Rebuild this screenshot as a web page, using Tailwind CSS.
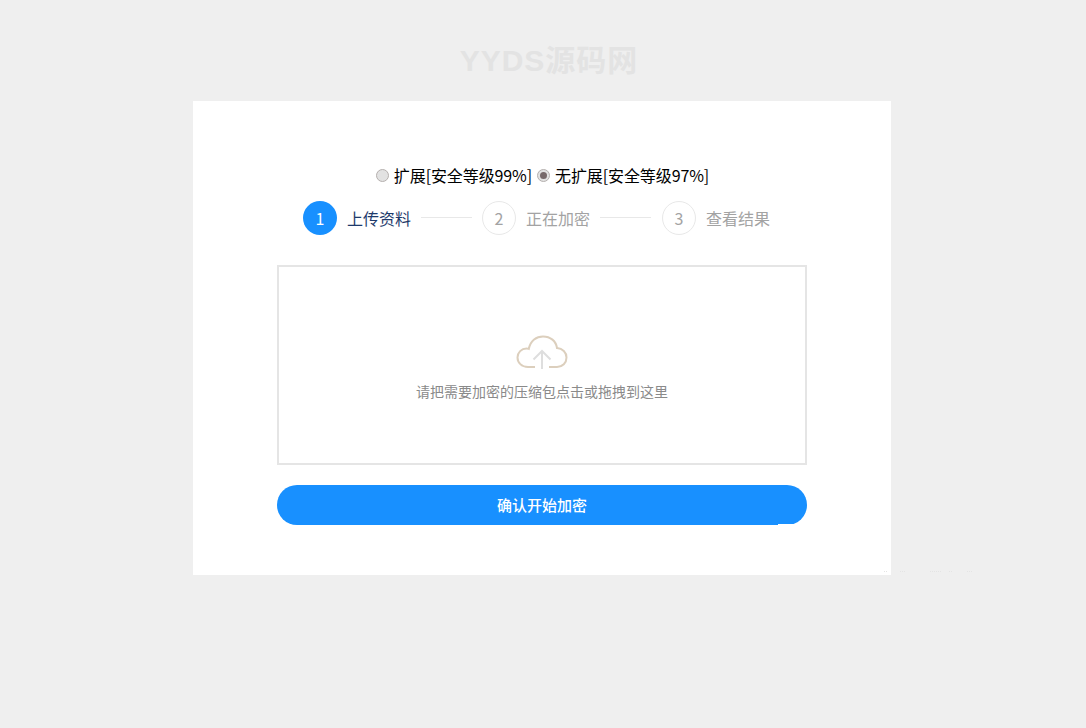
<!DOCTYPE html>
<html lang="zh-CN">
<head>
<meta charset="utf-8">
<script src="https://cdn.jsdelivr.net/npm/@tailwindcss/browser@4"></script>
<title>YYDS源码网</title>
</head>
<body class="bg-[#efefef] h-[728px] overflow-hidden font-['Noto_Sans_CJK_SC','Noto_Sans',sans-serif]">
  <div class="flex flex-col items-center w-[1084px]">
    <h1 class="h-[101px] pt-[41px] ml-[14px] leading-[40px] text-[30px] font-bold tracking-[1px] text-[#e3e3e3] font-['Liberation_Sans','Noto_Sans_CJK_SC',sans-serif]">YYDS源码网</h1>
    <main class="relative w-[698px] h-[474px] bg-white flex flex-col items-center pt-[61px]">
      <div class="flex items-center h-[26px] text-base text-black leading-[26px] tracking-[-0.1px] ml-px">
        <span class="w-[13px] h-[13px] rounded-full border border-[#b5b0ae] bg-[#e2e2e2] mr-[5px]"></span>
        <span>扩展[安全等级99%]</span>
        <span class="w-[13px] h-[13px] rounded-full border border-[#b5b0ae] bg-[#e2e2e2] ml-[5px] mr-[5px] flex items-center justify-center"><span class="w-[7px] h-[7px] rounded-full bg-[#77696a]"></span></span>
        <span>无扩展[安全等级97%]</span>
      </div>
      <div class="flex items-center h-[34px] mt-[13px] text-base self-start ml-[110px]">
        <span class="w-[34px] h-[34px] rounded-full bg-[#1890ff] text-white flex items-center justify-center">1</span>
        <span class="ml-[10px] text-[#1d3a6b]">上传资料</span>
        <span class="w-[51px] h-px bg-[#e8e8e8] mx-[10px] -translate-y-px"></span>
        <span class="w-[34px] h-[34px] rounded-full border border-[#e8e8e8] text-[#a3a3a3] flex items-center justify-center">2</span>
        <span class="ml-[10px] text-[#a3a3a3]">正在加密</span>
        <span class="w-[51px] h-px bg-[#e8e8e8] mx-[10px] -translate-y-px"></span>
        <span class="w-[34px] h-[34px] rounded-full border border-[#e8e8e8] text-[#a3a3a3] flex items-center justify-center ml-px">3</span>
        <span class="ml-[10px] text-[#a3a3a3]">查看结果</span>
      </div>
      <div class="w-[530px] h-[200px] mt-[30px] border-2 border-[#e5e5e5] flex flex-col items-center pt-[68px]">
        <svg class="w-[52px] h-[35px] block" viewBox="0 0 52 35" fill="none">
          <path d="M19 32H12C5.5 32 1.5 27.5 1.5 22.5C1.5 17.5 5.5 13.5 10.5 13.5C11.5 13.5 12 13.6 12.8 13.9C14.5 5.5 20.5 1.5 27 1.5C34.5 1.5 40 6 41 13C46.5 13.5 50.5 17.5 50.5 22.5C50.5 28 46.5 32 41 32H33" stroke="#dccfbd" stroke-width="2"/>
          <path d="M26 34V17M17.5 24.5L26 16L34.5 24.5" stroke="#dedede" stroke-width="2"/>
        </svg>
        <p class="mt-[10px] text-sm leading-[22px] text-[#8a8a8a]">请把需要加密的压缩包点击或拖拽到这里</p>
      </div>
      <div class="relative w-[530px] h-[40px] mt-[20px] rounded-[20px] bg-[#1890ff] text-white text-[15px] font-medium flex items-center justify-center">
        确认开始加密
        <span class="absolute left-[501px] bottom-0 w-[29px] h-px bg-white"></span>
      </div>
      <svg class="absolute left-[691px] top-[469px] w-[90px] h-[2px]" viewBox="0 0 90 2" fill="none" stroke="#e4e4e4" stroke-dasharray="1 1">
        <path d="M0 1.5H4M16 1.5H21M46 1.5H57M65 1.5H69M83 1.5H88"/>
      </svg>
    </main>
  </div>
</body>
</html>
